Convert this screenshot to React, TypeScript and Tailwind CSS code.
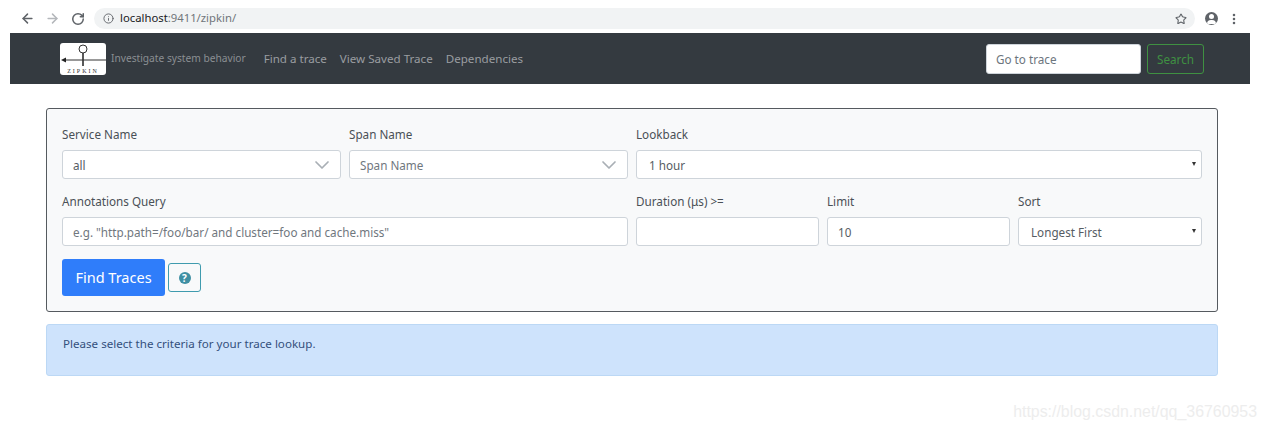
import React from "react";
import { ArrowLeft, ArrowRight, ChevronDown, Info, MoreVertical, RotateCw, Star } from "lucide-react";

const font = "font-['Noto_Sans','Open_Sans',sans-serif]";
const control =
  "flex h-[29px] w-full items-center rounded-[3px] border border-[#ced4da] bg-white pt-[2px] text-[11.7px] text-[#565c63]";

const ZipkinLogo = () => (
  <svg viewBox="0 0 46 32" className="h-8 w-[46px] shrink-0">
    <rect width="46" height="32" rx="3" fill="#fff" />
    <circle cx="23" cy="6" r="4" fill="none" stroke="#333" strokeWidth="1" />
    <path d="M23 10V23" stroke="#222" strokeWidth="1.5" />
    <path d="M5 17H46" stroke="#333" strokeWidth="1" />
    <path d="M1 17L6 14.5V19.5Z" fill="#222" />
    <text x="23" y="30" textAnchor="middle" fontFamily="Liberation Serif" fontSize="6" letterSpacing="2" fill="#333">
      ZIPKIN
    </text>
  </svg>
);

const Field: React.FC<{ label: string; className?: string; children: React.ReactNode }> = (props) => (
  <div className={props.className}>
    <label className="mb-[9px] block h-[14px] text-[11.7px] leading-[14px] text-[#4a5056]">{props.label}</label>
    {props.children}
  </div>
);

const ComboBox: React.FC<{ value: string; muted?: boolean }> = (props) => (
  <div className={control + " justify-between pl-[10px] pr-[6px]"}>
    <span className={props.muted ? "text-[#70777e]" : ""}>{props.value}</span>
    <ChevronDown className="-mt-[2px] size-6 text-[#a9afb5]" strokeWidth={1.7} />
  </div>
);

const NativeSelect: React.FC<{ value: string }> = (props) => (
  <div className={control + " justify-between pl-[12px] pr-[5px]"}>
    <span>{props.value}</span>
    <span className="-mt-[3px] h-0 w-0 border-x-[2.5px] border-t-[4px] border-x-transparent border-t-[#333]" />
  </div>
);

export default function App() {
  return (
    <div className={font + " h-[428px] w-[1266px] overflow-hidden bg-white"}>
      {/* browser toolbar */}
      <div className="flex h-[33px] items-center pl-[20px] pr-[21px] pt-[4px]">
        <ArrowLeft className="size-[15px] text-[#5f6368]" strokeWidth={2.4} />
        <ArrowRight className="ml-[10px] size-[15px] text-[#b4b7bb]" strokeWidth={2.4} />
        <RotateCw className="ml-[11px] size-[14px] text-[#5f6368]" strokeWidth={2.6} />
        <div className="ml-[9px] flex h-[21px] w-[1101px] items-center rounded-full bg-[#f1f3f4] pl-[9px] pr-[8px]">
          <Info className="size-[11px] text-[#5f6368]" strokeWidth={2} />
          <span className="ml-[6px] text-[11.3px] text-[#202124]">
            localhost<span className="text-[#70757a]">:9411/zipkin/</span>
          </span>
          <Star className="ml-auto size-[12px] text-[#5f6368]" strokeWidth={2.2} />
        </div>
        <div className="ml-[10px] flex size-[13px] items-center justify-center overflow-hidden rounded-full bg-[#5f6368]">
          <div className="flex flex-col items-center pt-[1px]">
            <div className="size-[5px] rounded-full bg-white" />
            <div className="mt-[1px] h-[4px] w-[9px] rounded-t-full bg-white" />
          </div>
        </div>
        <MoreVertical className="ml-[9px] size-[14px] text-[#5f6368]" strokeWidth={2.4} />
      </div>

      {/* navbar */}
      <div className="ml-[10px] mr-[16px] flex h-[51px] items-center bg-[#343a40] pl-[50px] pr-[46px]">
        <ZipkinLogo />
        <span className="ml-[5px] pt-[1px] text-[10.2px] text-[#8b8f93]">Investigate system behavior</span>
        <nav className="ml-[18px] flex gap-[13px] text-[11.6px] text-[#9a9da0]">
          <a>Find a trace</a>
          <a>View Saved Trace</a>
          <a>Dependencies</a>
        </nav>
        <div className="ml-auto flex h-[30px] w-[155px] items-center rounded-[3px] border border-[#ced4da] bg-white pl-[9px] pt-[2px] text-[11.7px] text-[#6c757d]">
          Go to trace
        </div>
        <button className="ml-[6px] h-[30px] w-[57px] rounded-[3px] border border-[#3f9142] pt-[2px] text-[11.7px] text-[#3f9142]">
          Search
        </button>
      </div>

      {/* search form */}
      <div className="ml-[46px] mr-[48px] mt-[24px] h-[204px] rounded-[3px] border border-[#555a5f] bg-[#f8f9fa] pl-[15px] pr-[15px] pt-[18px]">
        <div className="grid grid-cols-[279px_279px_183px_183px_184px] gap-x-2 gap-y-[15px]">
          <Field label="Service Name">
            <ComboBox value="all" />
          </Field>
          <Field label="Span Name">
            <ComboBox value="Span Name" muted />
          </Field>
          <Field label="Lookback" className="col-span-3">
            <NativeSelect value="1 hour" />
          </Field>
          <Field label="Annotations Query" className="col-span-2">
            <div className={control + " pl-[10px]"}>
              <span className="text-[#70777e]">e.g. "http.path=/foo/bar/ and cluster=foo and cache.miss"</span>
            </div>
          </Field>
          <Field label="Duration (μs) >=">
            <div className={control} />
          </Field>
          <Field label="Limit">
            <div className={control + " pl-[10px]"}>10</div>
          </Field>
          <Field label="Sort">
            <NativeSelect value="Longest First" />
          </Field>
        </div>
        <div className="mt-[13px] flex items-center gap-[3px]">
          <button className="h-[37px] w-[103px] rounded-[3px] bg-[#2f7dfa] text-[14.5px] text-white">Find Traces</button>
          <button className="flex h-[29px] w-[33px] items-center justify-center rounded-[3px] border border-[#3f9bae]">
            <span className="flex size-[12px] items-center justify-center rounded-full bg-[#3f8fa3] text-[10px] font-bold leading-none text-white">
              ?
            </span>
          </button>
        </div>
      </div>

      {/* alert */}
      <div className="ml-[46px] mr-[48px] mt-[12px] h-[52px] rounded-[3px] border border-[#bcd8f5] bg-[#cee3fc] pl-[16px] pt-[10px] text-[11.6px] text-[#34507c]">
        Please select the criteria for your trace lookup.
      </div>

      {/* watermark */}
      <div className="mt-[26px] pr-[9px] text-right font-['Liberation_Sans',sans-serif] text-[15.9px] leading-[20px] text-[#ededed]">
        https://blog.csdn.net/qq_36760953
      </div>
    </div>
  );
}
